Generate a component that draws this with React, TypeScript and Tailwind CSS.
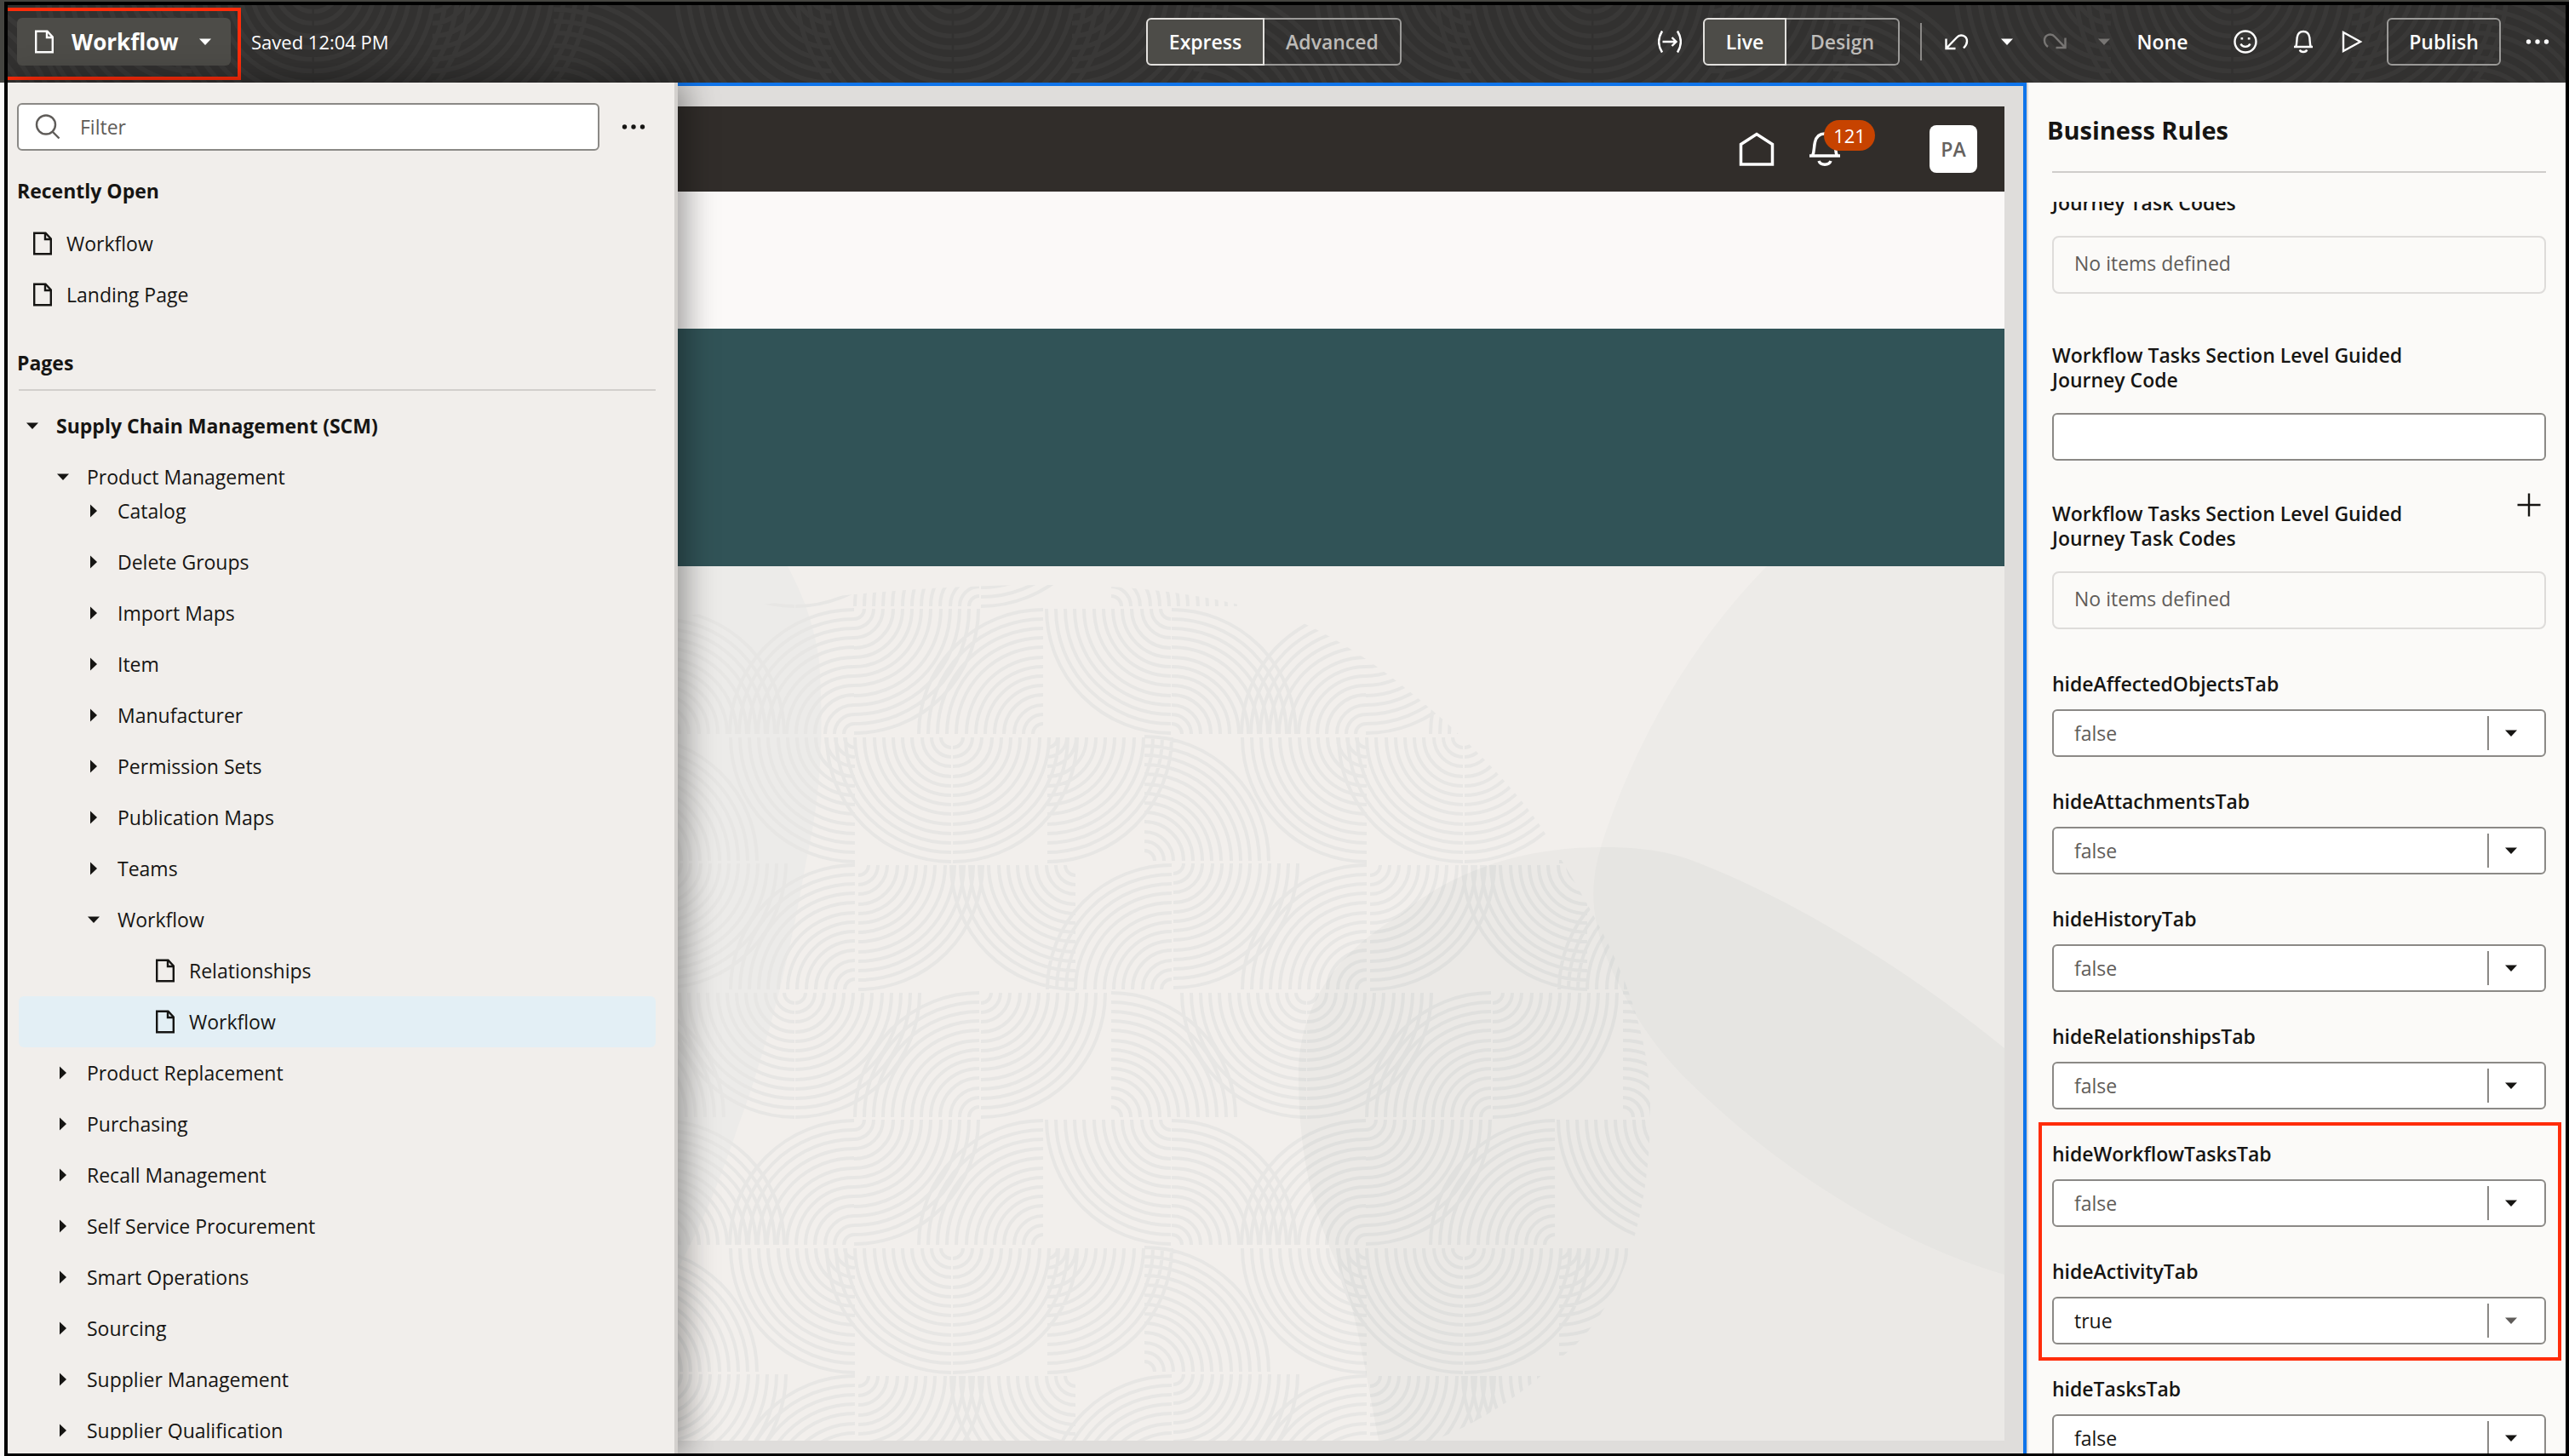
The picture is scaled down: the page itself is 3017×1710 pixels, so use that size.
import React, { useState } from 'react';

type Quadrant = 'ul' | 'ur' | 'll' | 'lr';

// One 601x600 repeat of the arc texture: corner point of each quarter and the side it opens to.
const QUARTERS: [number, number, Quadrant][] = [
    [0, 0, 'lr'],
    [0, 147, 'ul'],
    [222, 147, 'ul'],
    [372, 0, 'll'],
    [373, 147, 'ur'],
    [114, 151, 'll'],
    [116, 151, 'lr'],
    [227, 151, 'lr'],
    [341, 296, 'ur'],
    [602, 151, 'll'],
    [5, 301, 'lr'],
    [260, 301, 'll'],
    [373, 447, 'ul'],
    [375, 299, 'lr'],
    [602, 447, 'ul'],
    [147, 597, 'ul'],
    [149, 451, 'lr'],
    [302, 597, 'ur'],
    [531, 451, 'll'],
    [532, 451, 'lr'],
];

const RADII = [12, 23, 34, 46, 57, 68, 79, 90, 102, 113, 124, 135, 146];

const quarterPath = (cx: number, cy: number, q: Quadrant) => {
    const dx = q === 'ur' || q === 'lr' ? 1 : -1;
    const dy = q === 'll' || q === 'lr' ? 1 : -1;
    const sweep = dx * dy > 0 ? 1 : 0;
    return RADII.map((r) => `M${cx + dx * r} ${cy}A${r} ${r} 0 0 ${sweep} ${cx} ${cy + dy * r}`).join('');
};

const TILE_PATH = QUARTERS.map(([x, y, q]) => quarterPath(x, y, q)).join('');

const tiles = (cols: number[], rows: number[]) =>
    rows.flatMap((row) => cols.map((col) => ({ key: `${col}:${row}`, x: col * 601, y: row * 600 })));

const HeaderTexture: React.FC = () => (
    <svg className="absolute inset-0 h-full w-full" aria-hidden="true">
        <g transform="translate(215 -210) scale(1.25)" fill="none" stroke="#393837" strokeWidth="4.5">
            {tiles([-1, 0, 1, 2, 3], [0]).map((t) => (
                <path key={t.key} d={TILE_PATH} transform={`translate(${t.x} ${t.y})`} />
            ))}
        </g>
    </svg>
);

const CanvasArt: React.FC = () => (
    <svg className="h-full w-full" viewBox="0 0 1558 1027" preserveAspectRatio="xMinYMin slice" aria-hidden="true">
        <defs>
            <clipPath id="pebble">
                <path d="M0 60C150 35 300 22 432 22C560 22 650 38 735 67C850 120 980 250 1020 316C1090 430 1142 520 1142 640C1142 780 1100 880 1040 927C980 985 930 1010 880 1030H0Z" />
            </clipPath>
        </defs>
        <rect width="1558" height="1027" fill="#f2efec" />
        <path d="M0 0H129C150 40 160 70 166 111C172 200 168 270 150 350C130 470 100 580 71 657C50 720 30 770 0 825Z" fill="#ecebe9" />
        <g clipPath="url(#pebble)">
            <g transform="translate(207 50)" fill="none" stroke="#e7e6e4" strokeWidth="4">
                {tiles([-1, 0, 1], [-1, 0, 1]).map((t) => (
                    <path key={t.key} d={TILE_PATH} transform={`translate(${t.x} ${t.y})`} />
                ))}
            </g>
        </g>
        <path d="M1279 0C1190 90 1130 200 1093 303C1070 365 1065 410 1105 491C1140 560 1175 595 1215 631C1300 710 1430 795 1558 832V0Z" fill="#3f4a46" fillOpacity="0.025" />
        <path d="M1558 566C1440 470 1300 385 1184 343C1150 332 1120 330 1086 330C980 330 900 365 848 410C780 450 729 510 729 598C729 690 745 760 780 832C800 890 810 960 823 1027H1558Z" fill="#3f4a4c" fillOpacity="0.035" />
    </svg>
);

const DocIcon: React.FC = () => (
    <svg className="h-7 w-6 shrink-0" viewBox="0 0 24 28" fill="none" stroke="currentColor" strokeWidth="2.4" aria-hidden="true">
        <path d="M2.2 1.7H15.5L21.8 8.5V26.3H2.2Z" />
        <path d="M15 2V9H21.5" />
    </svg>
);

const CaretDown: React.FC = () => (
    <svg className="h-2 w-3.5 shrink-0" viewBox="0 0 14 8" fill="currentColor" aria-hidden="true">
        <path d="M0 0.5H14L7 8Z" />
    </svg>
);

const CaretRight: React.FC = () => (
    <svg className="h-4 w-2 shrink-0" viewBox="0 0 8 16" fill="currentColor" aria-hidden="true">
        <path d="M0 0.5V15.5L8 8Z" />
    </svg>
);

const Dots: React.FC = () => (
    <svg className="h-2 w-7" viewBox="0 0 28 8" fill="currentColor" aria-hidden="true">
        <circle cx="3.5" cy="4" r="2.7" />
        <circle cx="14" cy="4" r="2.7" />
        <circle cx="24.5" cy="4" r="2.7" />
    </svg>
);

const UndoIcon: React.FC = () => (
    <svg className="h-7 w-7" viewBox="0 0 28 28" fill="none" stroke="currentColor" strokeWidth="2.4" aria-hidden="true">
        <path d="M1.5 10.5V22H12.5M1.8 21.7L14 9C18 4.5 26 6.5 26 13.5C26 17 24.5 19 22 21.5" />
    </svg>
);

const RedoIcon: React.FC = () => (
    <svg className="h-7 w-7" viewBox="0 0 28 28" fill="none" stroke="currentColor" strokeWidth="2.4" aria-hidden="true">
        <path d="M26.5 9.5V21H15.5M26.2 20.7L14 8C10 3.5 2 5.5 2 12.5C2 16 3.5 18 6 20" />
    </svg>
);

const Toggle: React.FC<{ options: [string, string]; first: string; second: string }> = ({ options, first, second }) => {
    const [active, setActive] = useState(options[0]);
    return (
        <div className="flex h-14 text-[23px] font-semibold">
            {options.map((option, i) => (
                <button
                    key={option}
                    type="button"
                    aria-pressed={active === option}
                    onClick={() => setActive(option)}
                    className={`${i === 0 ? `rounded-l-md ${first}` : `rounded-r-md ${second}`} ${
                        active === option
                            ? 'border-2 border-[#e3e1de] bg-[#4d4c48] text-white'
                            : 'border-2 border-l-0 border-[#9b9a98] text-[#bdbbb8]'
                    }`}
                >
                    {option}
                </button>
            ))}
        </div>
    );
};

const TopBar: React.FC = () => (
    <header className="relative h-[91px] shrink-0 overflow-hidden bg-[#323130] text-white">
        <HeaderTexture />
        <div className="relative grid grid-cols-[1326fr_auto_1348fr] pt-[15px] pr-[19px] pl-[11px]">
            <div className="flex items-center gap-6">
                <button type="button" className="flex h-14 w-[251px] items-center rounded-md bg-[#4d4c48] pl-5 text-[26px] font-bold">
                    <DocIcon />
                    <span className="ml-5 mr-6">Workflow</span>
                    <CaretDown />
                </button>
                <span className="text-[22px]">Saved 12:04 PM</span>
            </div>
            <Toggle options={['Express', 'Advanced']} first="w-[139px]" second="w-[161px]" />
            <div className="flex items-center justify-end">
                <button type="button" aria-label="Fit width">
                    <svg className="h-7 w-7" viewBox="0 0 28 28" fill="none" stroke="currentColor" strokeWidth="2.4" aria-hidden="true">
                        <path d="M5 1.5C0 9.5 0 18.5 5 26.5M23 1.5C28 9.5 28 18.5 23 26.5M5.5 14H21M16.5 9L21.5 14L16.5 19" />
                    </svg>
                </button>
                <div className="ml-[25px]">
                    <Toggle options={['Live', 'Design']} first="w-[98px]" second="w-[133px]" />
                </div>
                <span className="ml-6 h-11 w-0.5 bg-[#8b8987]" />
                <button type="button" aria-label="Undo" className="ml-[27px]">
                    <UndoIcon />
                </button>
                <button type="button" aria-label="Undo history" className="ml-[38px]">
                    <CaretDown />
                </button>
                <button type="button" aria-label="Redo" className="ml-[35px] text-[#777573]">
                    <RedoIcon />
                </button>
                <button type="button" aria-label="Redo history" className="ml-[37px] text-[#777573]">
                    <CaretDown />
                </button>
                <button type="button" className="ml-[30px] w-[63px] text-[23px] font-semibold">
                    None
                </button>
                <button type="button" aria-label="Feedback" className="ml-[52px]">
                    <svg className="h-7 w-7" viewBox="0 0 28 28" fill="none" stroke="currentColor" strokeWidth="2.4" aria-hidden="true">
                        <circle cx="14" cy="14" r="12.5" />
                        <path d="M8.5 16.5C10.5 21 17.5 21 19.5 16.5" />
                        <path d="M8.5 10.2H11.2M16.8 10.2H19.5" />
                    </svg>
                </button>
                <button type="button" aria-label="Notifications" className="ml-10">
                    <svg className="h-7 w-7" viewBox="0 0 28 28" fill="none" stroke="currentColor" strokeWidth="2.4" aria-hidden="true">
                        <path d="M3 20H25M5.2 20C6.5 17 6.2 13 6.7 9C7.5 4 10 2 14 2C18 2 20.5 4 21.3 9C21.8 13 21.5 17 22.8 20" />
                        <path d="M9.8 23.5C11 26.8 17 26.8 18.2 23.5" />
                    </svg>
                </button>
                <button type="button" aria-label="Preview" className="ml-7">
                    <svg className="h-7 w-7" viewBox="0 0 28 28" fill="none" stroke="currentColor" strokeWidth="2.4" aria-hidden="true">
                        <path d="M5 3V25L25 14Z" />
                    </svg>
                </button>
                <button type="button" className="ml-7 h-14 w-[134px] rounded-md border-2 border-[#9b9a98] text-[23px] font-semibold">
                    Publish
                </button>
                <button type="button" aria-label="More actions" className="ml-[29px]">
                    <Dots />
                </button>
            </div>
        </div>
        {/* Callout around the page switcher */}
        <div className="pointer-events-none absolute top-[3px] left-0 h-[85px] w-[274px] border-4 border-l-0 border-[#ff2c0a]" />
    </header>
);

interface TreeItem {
    label: string;
    level: 0 | 1 | 2 | 3;
    open?: boolean;
    selected?: boolean;
}

const TREE: TreeItem[] = [
    { label: 'Supply Chain Management (SCM)', level: 0, open: true },
    { label: 'Product Management', level: 1, open: true },
    { label: 'Catalog', level: 2 },
    { label: 'Delete Groups', level: 2 },
    { label: 'Import Maps', level: 2 },
    { label: 'Item', level: 2 },
    { label: 'Manufacturer', level: 2 },
    { label: 'Permission Sets', level: 2 },
    { label: 'Publication Maps', level: 2 },
    { label: 'Teams', level: 2 },
    { label: 'Workflow', level: 2, open: true },
    { label: 'Relationships', level: 3 },
    { label: 'Workflow', level: 3, selected: true },
    { label: 'Product Replacement', level: 1 },
    { label: 'Purchasing', level: 1 },
    { label: 'Recall Management', level: 1 },
    { label: 'Self Service Procurement', level: 1 },
    { label: 'Smart Operations', level: 1 },
    { label: 'Sourcing', level: 1 },
    { label: 'Supplier Management', level: 1 },
    { label: 'Supplier Qualification', level: 1 },
];

const INDENT = {
    0: 'pl-0.5 font-bold',
    1: 'pl-[38px]',
    2: 'pl-[74px]',
    3: 'pl-[160px]',
};

const TreeRow: React.FC<{ item: TreeItem }> = ({ item }) => (
    <li className={item.level === 1 && item.open ? '-mb-5' : ''}>
        <button
            type="button"
            aria-expanded={item.level < 3 ? !!item.open : undefined}
            className={`flex h-[60px] w-full items-center rounded-md text-left ${INDENT[item.level]} ${
                item.selected ? 'bg-[#e3eff5]' : ''
            }`}
        >
            {item.level === 3 ? (
                <DocIcon />
            ) : (
                <span className="flex w-7 justify-center">{item.open ? <CaretDown /> : <CaretRight />}</span>
            )}
            <span className={item.level === 3 ? 'ml-4' : 'ml-3.5'}>{item.label}</span>
        </button>
    </li>
);

const PagesPanel: React.FC = () => (
    <aside className="relative z-10 flex w-[787px] shrink-0 flex-col overflow-hidden border-r-4 border-[#d3d0cd] bg-[#f1eeeb] pt-6 pr-[22px] pb-4 pl-[11px] shadow-[8px_0_36px_rgba(0,0,0,0.4)]">
        <div className="flex shrink-0 items-center">
            <label className="flex h-14 w-[684px] items-center rounded-md border-2 border-[#8b8986] bg-white pl-[19px] text-[#5f5c59]">
                <svg className="h-[30px] w-[30px] shrink-0" viewBox="0 0 30 30" fill="none" stroke="currentColor" strokeWidth="2.4" aria-hidden="true">
                    <circle cx="13" cy="12.5" r="11" />
                    <path d="M20.5 20.5L28.5 28.5" />
                </svg>
                <input type="text" aria-label="Filter" placeholder="Filter" className="ml-[23px] min-w-0 flex-1 outline-none placeholder:text-[#5f5c59]" />
            </label>
            <button type="button" aria-label="Filter options" className="ml-[26px]">
                <Dots />
            </button>
        </div>
        <h2 className="mt-[31px] shrink-0 leading-8 font-bold">Recently Open</h2>
        <ul className="mt-4 shrink-0">
            {['Workflow', 'Landing Page'].map((page) => (
                <li key={page}>
                    <a href="#" className="flex h-[60px] items-center gap-4 pl-[18px]">
                        <DocIcon />
                        {page}
                    </a>
                </li>
            ))}
        </ul>
        <h2 className="mt-[34px] shrink-0 leading-8 font-bold">Pages</h2>
        <hr className="mt-[15px] ml-0.5 shrink-0 border-t-2 border-[#d2cfcc]" />
        <ul className="mt-[11px] ml-0.5 min-h-0 flex-1 overflow-hidden">
            {TREE.map((item, i) => (
                <TreeRow key={i} item={item} />
            ))}
        </ul>
    </aside>
);

const Preview: React.FC = () => (
    <main className="flex min-w-0 flex-1 flex-col border-t-4 border-r-4 border-[#0f74ea] bg-[#dfdddb] pt-6 pr-[22px] pb-[15px]">
        <div className="flex h-[100px] shrink-0 items-center justify-end bg-[#312d2a] pr-8 text-white">
            <button type="button" aria-label="Home">
                <svg className="h-10 w-[42px]" viewBox="0 0 42 40" fill="none" stroke="currentColor" strokeWidth="3.5" aria-hidden="true">
                    <path d="M2.5 14.5L21 2.5L39.5 14.5V38H2.5Z" />
                </svg>
            </button>
            <button type="button" aria-label="Notifications, 121 new" className="relative ml-10">
                <svg className="h-10 w-[38px]" viewBox="0 0 38 40" fill="none" stroke="currentColor" strokeWidth="3.5" aria-hidden="true">
                    <path d="M1 28H37M4.500 28C7 23 6 18 7.500 12C9 5 13 2 19 2C25 2 29 5 30.500 12C32 18 31 23 33.500 28" />
                    <path d="M12 34C14 39.500 24 39.500 26 34" />
                </svg>
                <span className="absolute -top-3.5 left-[18px] flex h-9 w-[60px] items-center justify-center rounded-full bg-[#c74300] text-[22px]">
                    121
                </span>
            </button>
            <button type="button" className="ml-[104px] h-14 w-14 rounded-lg bg-white text-[23px] font-semibold text-[#65625f]">
                PA
            </button>
        </div>
        <div className="h-[161px] shrink-0 bg-[#fbf9f8]" />
        <div className="h-[279px] shrink-0 bg-[#315357]" />
        <div className="min-h-0 flex-1 overflow-hidden">
            <CanvasArt />
        </div>
    </main>
);

const SelectField: React.FC<{ name: string; value: string; tone?: string; caret?: string }> = ({
    name,
    value,
    tone = 'text-[#5f5c59]',
    caret = 'text-[#161513]',
}) => (
    <div className="pt-[38px]">
        <label htmlFor={name} className="block leading-[29px] font-semibold">
            {name}
        </label>
        <div className="relative mt-[15px]">
            <select
                id={name}
                defaultValue={value}
                className={`block h-14 w-full appearance-none rounded-md border-2 border-[#8b8986] bg-white pl-6 ${tone}`}
            >
                <option>false</option>
                <option>true</option>
            </select>
            <div className="pointer-events-none absolute inset-y-2 right-0 flex w-[69px] items-center border-l-2 border-[#8b8986] pl-[19px]">
                <span className={`flex ${caret}`}>
                    <CaretDown />
                </span>
            </div>
        </div>
    </div>
);

const EmptyList: React.FC = () => (
    <p className="mt-6 flex h-[68px] items-center rounded-lg border-2 border-[#dedcda] pb-1 pl-6 font-medium text-[#5f5c59]">
        No items defined
    </p>
);

const RulesPanel: React.FC = () => (
    <aside className="flex w-[633px] shrink-0 flex-col border-l-2 border-[#dedad7] bg-[#fbfaf8] pt-[38px]">
        <h1 className="pl-[22px] text-[29px] leading-9 font-bold">Business Rules</h1>
        <hr className="mt-[30px] mr-[23px] ml-7 border-t-2 border-[#cfcdcb]" />
        <div className="mt-[34px] min-h-0 flex-1 overflow-hidden pr-[23px] pl-7">
            <h2 className="-mt-[42px] w-[460px] leading-[29px] font-semibold">
                Workflow Tasks Section Level Guided Journey Task Codes
            </h2>
            <EmptyList />
            <label htmlFor="guided-code" className="mt-[58px] block w-[460px] leading-[29px] font-semibold">
                Workflow Tasks Section Level Guided Journey Code
            </label>
            <input id="guided-code" type="text" className="mt-6 block h-14 w-full rounded-md border-2 border-[#8b8986] bg-white pl-6" />
            <div className="mt-9 flex items-start justify-between pr-1.5">
                <h2 className="mt-3 w-[460px] leading-[29px] font-semibold">
                    Workflow Tasks Section Level Guided Journey Task Codes
                </h2>
                <button type="button" aria-label="Add task code" className="mt-0.5">
                    <svg className="h-7 w-7" viewBox="0 0 28 28" fill="none" stroke="currentColor" strokeWidth="2.4" aria-hidden="true">
                        <path d="M14 0.5V27.5M0.5 14H27.5" />
                    </svg>
                </button>
            </div>
            <EmptyList />
            <div className="mt-3">
                <SelectField name="hideAffectedObjectsTab" value="false" />
                <SelectField name="hideAttachmentsTab" value="false" />
                <SelectField name="hideHistoryTab" value="false" />
                <SelectField name="hideRelationshipsTab" value="false" />
                <div className="relative">
                    <SelectField name="hideWorkflowTasksTab" value="false" />
                    <SelectField name="hideActivityTab" value="true" tone="text-[#161513]" caret="text-[#5f5c59]" />
                    <div className="pointer-events-none absolute top-[15px] -right-[18px] -bottom-[19px] -left-4 border-4 border-[#ff2c0a]" />
                </div>
                <SelectField name="hideTasksTab" value="false" tone="text-[#161513]" />
            </div>
        </div>
    </aside>
);

const App: React.FC = () => (
    <div className="h-screen bg-[linear-gradient(#454541_97px,#fbf9f8_97px)] pt-0.5 pl-[5px] font-['Open_Sans','Noto_Sans',sans-serif] text-[23px] text-[#161513]">
        <div className="flex h-full flex-col overflow-hidden border-4 border-b-[3px] border-black bg-[#f1eeeb]">
            <TopBar />
            <div className="flex min-h-0 flex-1">
                <PagesPanel />
                <Preview />
                <RulesPanel />
            </div>
        </div>
    </div>
);

export default App;
